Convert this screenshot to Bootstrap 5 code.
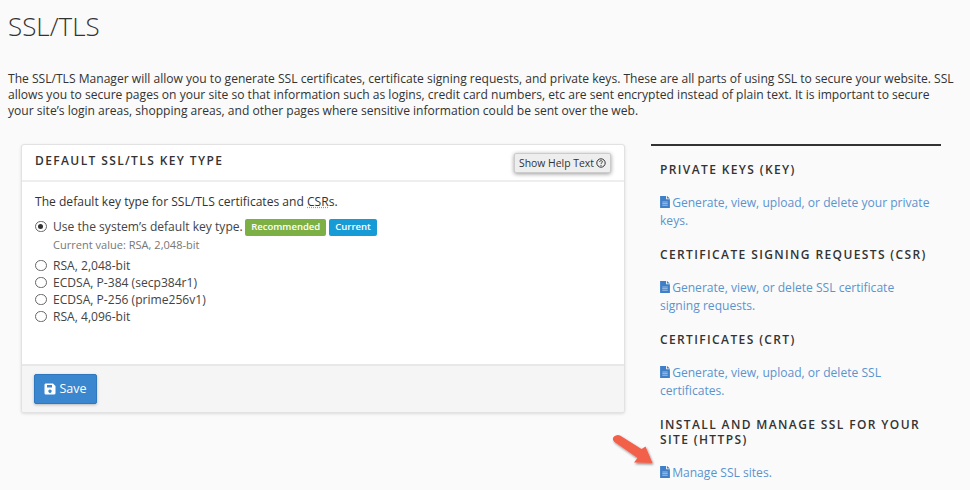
<!doctype html>
<html lang="en"><head><meta charset="utf-8"><title>SSL/TLS</title>
<link href="https://cdn.jsdelivr.net/npm/bootstrap@5.3.0/dist/css/bootstrap.min.css" rel="stylesheet">
<style>
html,body{height:490px;overflow:hidden}
body{background:#fafafa;color:#333;font-family:"Open Sans",sans-serif;font-size:12.08px;line-height:16px;padding:0 8px}
.page-title{font-family:"Open Sans",sans-serif;font-weight:300;font-size:26px;line-height:36px;margin:8px 0 0;color:#333}
.intro{margin:27px 8px 0 0;color:#333;line-height:16px;width:946px}
.main-row{display:flex;margin-top:25px}
.key-panel{width:604px;height:269px;margin-left:13px;background:#fff;border:1px solid #e2e2e2;border-radius:3px;box-shadow:0 1px 3px rgba(0,0,0,.12);display:flex;flex-direction:column}
.key-head{height:37px;border-bottom:2px solid #eee;display:flex;justify-content:space-between;padding:8px 13px 0 13px}
.key-title,.side-title{font-weight:600;font-size:12px;letter-spacing:1.38px;text-transform:uppercase;color:#333;line-height:15px;margin:0}
.help-btn{height:20px;width:97px;align-self:flex-start;background:#eee;border:1px solid #ccc;border-radius:2px;box-shadow:0 1px 4px rgba(0,0,0,.4);font-size:10.4px;line-height:17px;padding:0 4px;color:#333;display:flex;align-items:center;gap:2px;white-space:nowrap}
.key-body{flex:1;padding:12px 13px 0}
.key-desc{margin:0 0 8px}
abbr.csr{text-decoration:underline dotted #999;cursor:help}
.opt{display:flex;align-items:center;gap:6.5px;height:17px;color:#444}
.opt-dot{width:11.500px;height:11.500px;border:1px solid #666;border-radius:50%;flex:none;display:flex;align-items:center;justify-content:center;background:#fff}
.opt-dot i{width:5px;height:5px;border-radius:50%;background:#333}
.sub-val{font-size:11.05px;color:#777;margin:0 0 3px 18px;height:19px;line-height:20px}
.tag{font-size:9.5px;font-weight:600;color:#fff;line-height:16px;height:17px;padding:0 6px;border-radius:2px;display:inline-block;margin-right:3px;margin-top:1px}
.tag-green{background:#7cb044}
.tag-blue{background:#179bd7}
.key-foot{height:48px;background:#f5f5f5;border-top:2px solid #e8e8e8;padding:8px 12px;border-radius:0 0 3px 3px}
.save-btn{width:63px;height:29.500px;background:#3a87d0;border:1px solid #2f78bd;border-radius:2px;color:#fff;font-size:12.5px;display:flex;align-items:center;justify-content:center;gap:3px;padding:0;box-shadow:0 1px 3px rgba(0,0,0,.25)}
.side-col{width:290px;margin-left:26px;border-top:2px solid #333;padding:16px 9px 0;position:relative}
.side-col a{color:#5a94cf;text-decoration:none;line-height:18px;display:block;margin-top:16.500px;margin-bottom:17.500px}
.side-col a svg{vertical-align:-1.500px;margin-right:-1px}
.pointer{position:absolute;left:-40px;top:288px}
</style></head><body>
<h1 class="page-title">SSL/TLS</h1>
<p class="intro">The SSL/TLS Manager will allow you to generate SSL certificates, certificate signing requests, and private keys. These are all parts of using SSL to secure your website. SSL allows you to secure pages on your site so that information such as logins, credit card numbers, etc are sent encrypted instead of plain text. It is important to secure your site’s login areas, shopping areas, and other pages where sensitive information could be sent over the web.</p>
<div class="main-row">
  <section class="key-panel">
    <div class="key-head"><h2 class="key-title">Default SSL/TLS Key Type</h2>
      <button class="help-btn" type="button">Show Help Text <svg width="10" height="10" viewBox="0 0 10 10"><circle cx="5" cy="5" r="4.200" fill="none" stroke="#333" stroke-width="1"/><path d="M3.600 4c0-1.800 2.800-1.800 2.800-.2 0 1-1.400 1-1.400 2.100" fill="none" stroke="#333" stroke-width=".9"/><circle cx="5" cy="7.300" r=".6" fill="#333"/></svg></button></div>
    <div class="key-body">
      <p class="key-desc">The default key type for SSL/TLS certificates and <abbr class="csr" title="Certificate Signing Requests">CSR</abbr>s.</p>
      <div class="opt"><span class="opt-dot"><i></i></span><span>Use the system’s default key type.</span> <span class="d-flex" style="margin-left:-4px"><span class="tag tag-green">Recommended</span><span class="tag tag-blue">Current</span></span></div>
      <div class="sub-val">Current value: RSA, 2,048-bit</div>
      <div class="opt"><span class="opt-dot"></span><span>RSA, 2,048-bit</span></div>
      <div class="opt"><span class="opt-dot"></span><span>ECDSA, P-384 (secp384r1)</span></div>
      <div class="opt"><span class="opt-dot"></span><span>ECDSA, P-256 (prime256v1)</span></div>
      <div class="opt"><span class="opt-dot"></span><span>RSA, 4,096-bit</span></div>
    </div>
    <div class="key-foot"><button class="save-btn" type="button"><svg width="12" height="12" viewBox="0 0 12 12"><path fill="#fff" fill-rule="evenodd" d="M1.500 .5h7.500l2.500 2.500v7a1.500 1.500 0 0 1-1.500 1.500h-8.500a1.500 1.500 0 0 1-1-1.500v-8a1.500 1.500 0 0 1 1-1.500zM3 2v2.500h5V2zM6 6.500a1.700 1.700 0 1 0 .01 0z"/></svg>Save</button></div>
  </section>
  <aside class="side-col">
    <h2 class="side-title">Private Keys (KEY)</h2>
    <a href="#"><svg width="10" height="12" viewBox="0 0 9 11"><path fill="#3f7fc8" d="M0 0h5.500v3h3.500v8h-9zM6.300 0l2.700 2.300h-2.700z"/><path stroke="#cfe0f3" stroke-width=".6" d="M2 5.500h5M2 7h5M2 8.500h5"/></svg> Generate, view, upload, or delete your private keys.</a>
    <h2 class="side-title">Certificate Signing Requests (CSR)</h2>
    <a href="#"><svg width="10" height="12" viewBox="0 0 9 11"><path fill="#3f7fc8" d="M0 0h5.500v3h3.500v8h-9zM6.300 0l2.700 2.300h-2.700z"/><path stroke="#cfe0f3" stroke-width=".6" d="M2 5.500h5M2 7h5M2 8.500h5"/></svg> Generate, view, or delete SSL certificate signing requests.</a>
    <h2 class="side-title">Certificates (CRT)</h2>
    <a href="#"><svg width="10" height="12" viewBox="0 0 9 11"><path fill="#3f7fc8" d="M0 0h5.500v3h3.500v8h-9zM6.300 0l2.700 2.300h-2.700z"/><path stroke="#cfe0f3" stroke-width=".6" d="M2 5.500h5M2 7h5M2 8.500h5"/></svg> Generate, view, upload, or delete SSL certificates.</a>
    <h2 class="side-title">Install and Manage SSL for your site (HTTPS)</h2>
    <a href="#"><svg width="10" height="12" viewBox="0 0 9 11"><path fill="#3f7fc8" d="M0 0h5.500v3h3.500v8h-9zM6.300 0l2.700 2.300h-2.700z"/><path stroke="#cfe0f3" stroke-width=".6" d="M2 5.500h5M2 7h5M2 8.500h5"/></svg> Manage SSL sites.</a>
    <svg class="pointer" width="50" height="36" viewBox="0 0 50 36"><defs><filter id="s" x="-20%" y="-20%" width="150%" height="150%"><feDropShadow dx="1" dy="1.500" stdDeviation="1.200" flood-color="#000" flood-opacity=".45"/></filter></defs><path filter="url(#s)" fill="#f2604a" d="M9 1.500L30.500 15L34.500 12.500L41.500 29L23 28.500L26.500 24L3.500 8Q.5 5 3 2.500Q6 0 9 1.500z"/></svg>
  </aside>
</div>
<script src="https://cdn.jsdelivr.net/npm/bootstrap@5.3.0/dist/js/bootstrap.bundle.min.js"></script>
</body></html>
